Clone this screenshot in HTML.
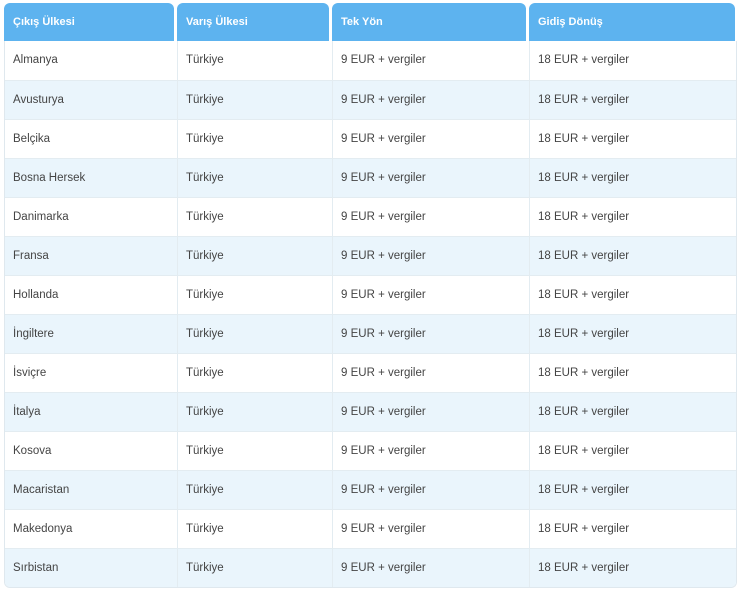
<!DOCTYPE html><html><head><style>
body{margin:0;width:741px;height:593px;background:#fff;font-family:"Liberation Sans",sans-serif;position:relative;overflow:hidden}
.h{position:absolute;top:3px;height:38px;background:#5db3ef;border-radius:6px 6px 0 0;color:#fff;font-weight:bold;font-size:11px;line-height:38px;padding-left:9px;box-sizing:border-box}
.t{position:absolute;left:4px;top:41px;width:731px;border:1px solid #dfe8ee;border-top:none;border-radius:0 0 6px 6px;overflow:hidden}
.r{height:39px;display:flex;border-top:1px solid #e3ecf1;box-sizing:border-box}
.r:nth-of-type(even){background:#eaf5fc}
.r:first-of-type{border-top:none}
.c{box-sizing:border-box;padding-left:8px;font-size:11.5px;color:#444;line-height:39px;border-left:1px solid #e3ecf1}
.c:first-child{border-left:none}
</style></head><body>
<div class="h" style="left:4px;width:170px">Çıkış Ülkesi</div>
<div class="h" style="left:177px;width:152px">Varış Ülkesi</div>
<div class="h" style="left:332px;width:194px">Tek Yön</div>
<div class="h" style="left:529px;width:206px">Gidiş Dönüş</div>
<div class="t">
<script>
var n=["Almanya","Avusturya","Belçika","Bosna Hersek","Danimarka","Fransa","Hollanda","İngiltere","İsviçre","İtalya","Kosova","Macaristan","Makedonya","Sırbistan"];
n.forEach(function(x){document.write('<div class="r"><div class="c" style="width:172px">'+x+'</div><div class="c" style="width:155px">Türkiye</div><div class="c" style="width:197px">9 EUR + vergiler</div><div class="c" style="flex:1">18 EUR + vergiler</div></div>')});
</script>
</div>
</body></html>
